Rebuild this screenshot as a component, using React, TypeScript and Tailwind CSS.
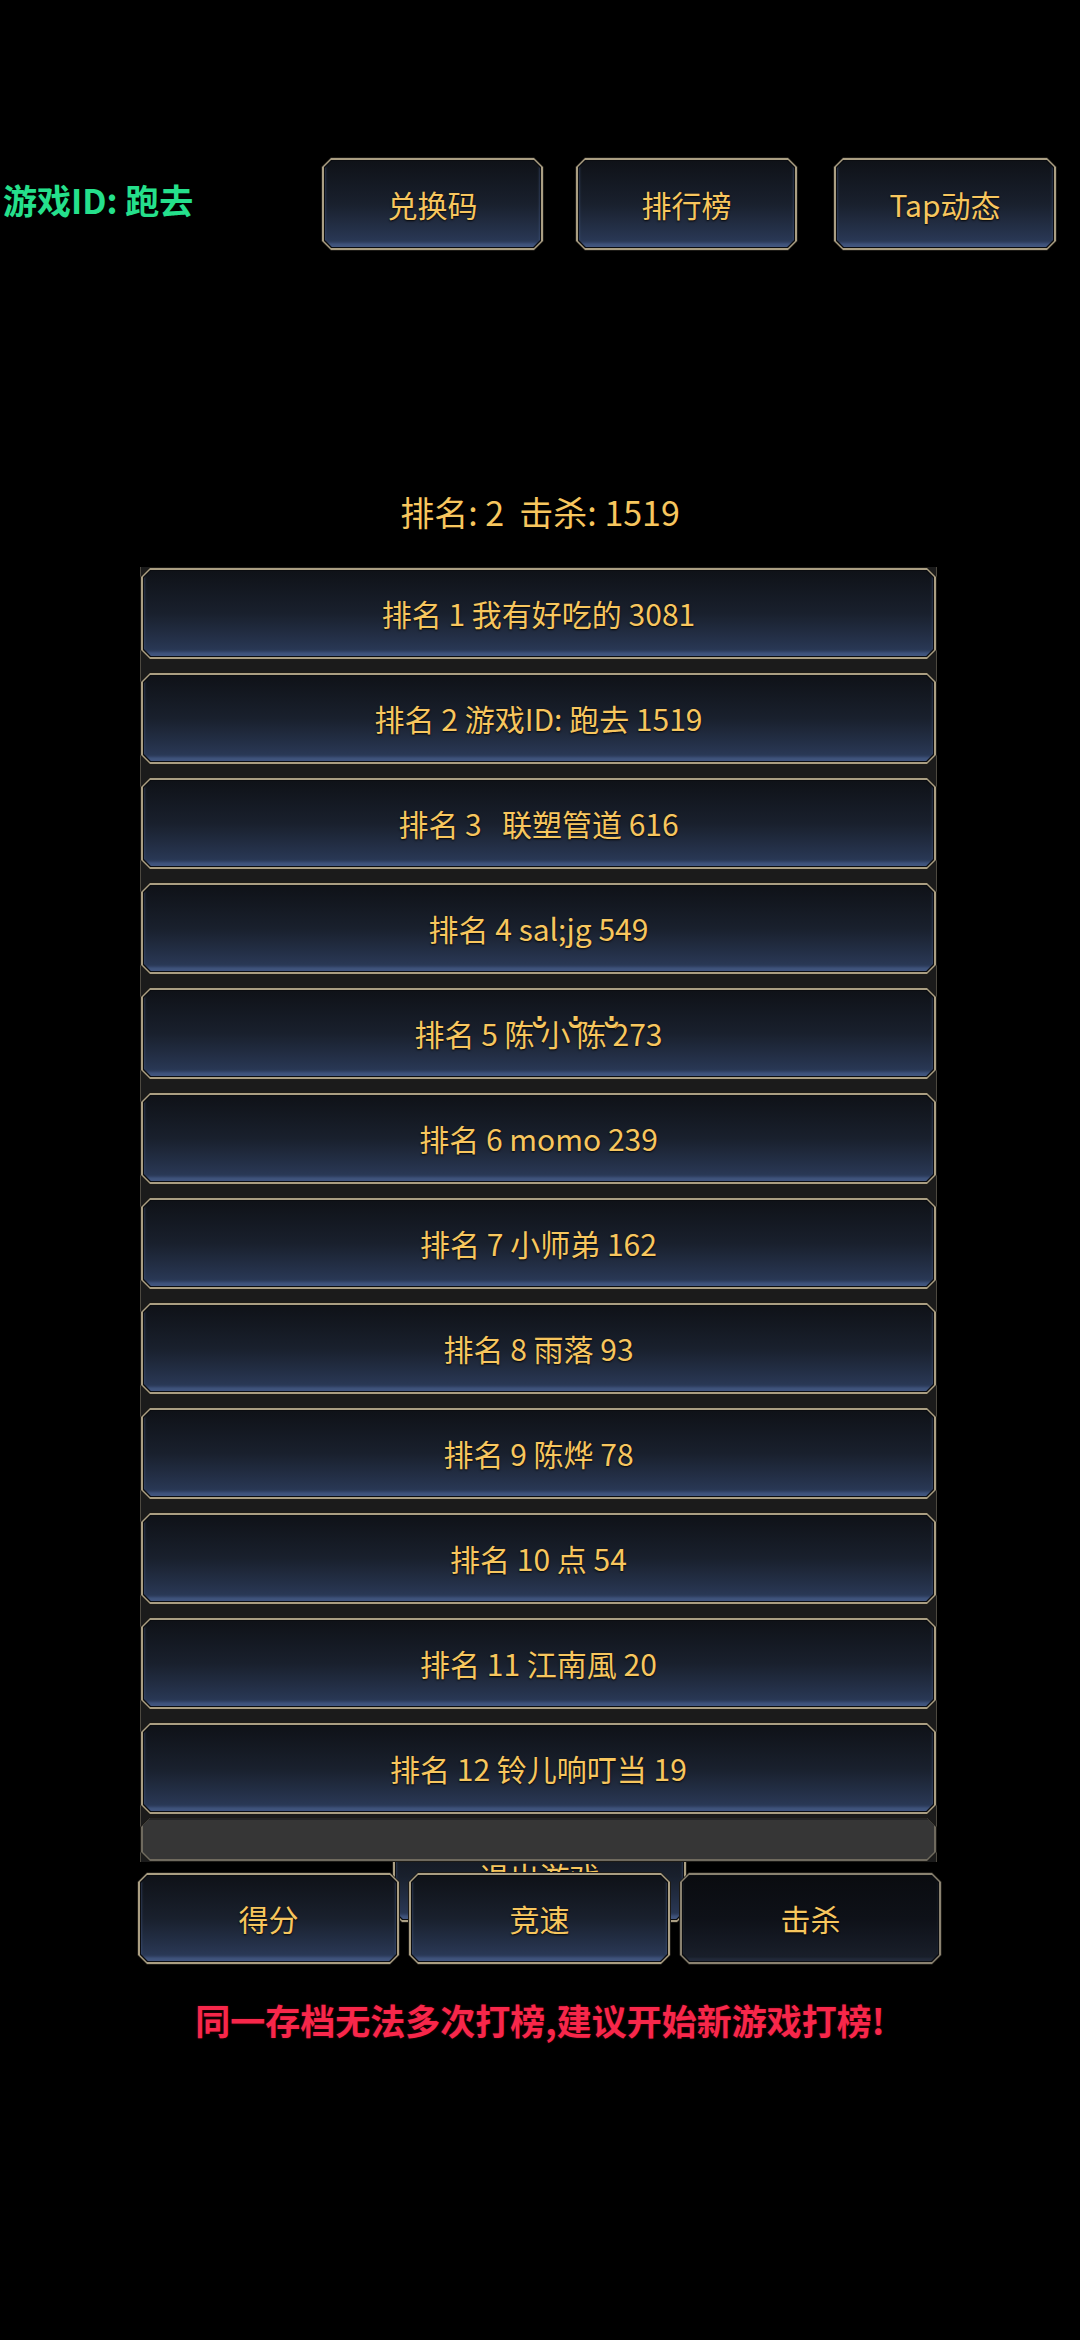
import React from 'react';

// chamfered frame clip paths (outer border / tan border / gradient face)
const CLIP_A = '[clip-path:polygon(10px_0,calc(100%_-_10px)_0,100%_10px,100%_calc(100%_-_10px),calc(100%_-_10px)_100%,10px_100%,0_calc(100%_-_10px),0_10px)]';
const CLIP_B = '[clip-path:polygon(9px_0,calc(100%_-_9px)_0,100%_9px,100%_calc(100%_-_9px),calc(100%_-_9px)_100%,9px_100%,0_calc(100%_-_9px),0_9px)]';
const CLIP_C = '[clip-path:polygon(7px_0,calc(100%_-_7px)_0,100%_7px,100%_calc(100%_-_7px),calc(100%_-_7px)_100%,7px_100%,0_calc(100%_-_7px),0_7px)]';

const GOLD_TEXT = 'text-[#f7c65e] [text-shadow:0_1px_2px_rgba(0,0,0,0.9)]';

interface FrameButtonProps {
    children: React.ReactNode;
    className?: string;
    dark?: boolean;
    textSize?: string;
}

const FrameButton: React.FC<FrameButtonProps> = ({ children, className = '', dark = false, textSize = 'text-[30px]' }) => {
    const face = dark
        ? 'bg-linear-to-b from-[#0a0c10] via-[#0e1118] to-[#1a202c] shadow-[inset_0_-3px_2px_#222a3a]'
        : 'bg-linear-to-b from-[#0f1218] via-[#19202d] to-[#2c3c5c] shadow-[inset_0_-4px_3px_#42567f]';
    const rim = dark ? 'bg-[#8a8270]' : 'bg-[#aa9e82]';
    return (
        <div className={`${CLIP_A} bg-[#1d1b17] p-px ${className}`}>
            <div className={`${CLIP_B} ${rim} h-full p-[2px]`}>
                <div className={`${CLIP_C} bg-[#0b0d11] h-full p-px`}>
                    <div className={`${CLIP_C} ${face} h-full flex items-center justify-center whitespace-pre ${textSize} ${GOLD_TEXT}`}>
                        {children}
                    </div>
                </div>
            </div>
        </div>
    );
};

// decorative combining mark that sits above the glyph boundary
const Swirl: React.FC = () => (
    <span className="relative inline-block w-[6px] overflow-visible">
        <span className="absolute left-[2px] -top-[14px] font-['DejaVu_Sans'] text-[44px] leading-none">{'\u00A0\u0310'}</span>
    </span>
);

const ranks: React.ReactNode[] = [
    '排名 1 我有好吃的 3081',
    '排名 2 游戏ID: 跑去 1519',
    '排名 3   联塑管道 616',
    '排名 4 sal;jg 549',
    <>排名 5 陈<Swirl />小<Swirl />陈<Swirl />273</>,
    '排名 6 momo 239',
    '排名 7 小师弟 162',
    '排名 8 雨落 93',
    '排名 9 陈烨 78',
    '排名 10 点 54',
    '排名 11 江南風 20',
    '排名 12 铃儿响叮当 19',
];

const App: React.FC = () => {
    return (
        <div className="relative w-[1080px] h-[2340px] bg-black overflow-hidden font-['Noto_Sans_CJK_SC','Noto_Sans',sans-serif]">
            {/* exit button, mostly hidden behind the list and tabs */}
            <FrameButton className="absolute left-[392px] top-[1830px] w-[295px] h-[93px] z-0">退出游戏</FrameButton>

            <div className="relative z-10 flex flex-col">
                {/* header */}
                <div className="flex items-center h-[94px] mt-[157px]">
                    <div className="w-[321px] pl-[3px] mb-[8px] text-[34px] font-bold text-[#25e08c] leading-none">游戏ID: 跑去</div>
                    <FrameButton className="w-[223px] h-[94px]">兑换码</FrameButton>
                    <FrameButton className="w-[223px] h-[94px] ml-[31px]">排行榜</FrameButton>
                    <FrameButton className="w-[224px] h-[94px] ml-[35px]">Tap动态</FrameButton>
                </div>

                <div className={`mt-[237px] h-[48px] leading-[48px] text-center whitespace-pre text-[34px] ${GOLD_TEXT}`}>
                    {'排名: 2  击杀: 1519'}
                </div>

                {/* leaderboard list */}
                <div className="ml-[140px] mt-[31px] w-[797px] flex flex-col bg-[#1b1b1b] border-x border-[#4d4940]">
                    <div className="flex flex-col gap-[12px] -mx-px">
                        {ranks.map((r, i) => (
                            <FrameButton key={i} className="h-[93px]">{r}</FrameButton>
                        ))}
                    </div>
                    <div className={`${CLIP_A} -mx-px mt-[2px] h-[45px] bg-[#1d1b17] p-px`}>
                        <div className={`${CLIP_B} h-full bg-[#6f6a5e] px-[2px] pb-[2px]`}>
                            <div className={`${CLIP_C} h-full bg-[#363636] border-t-2 border-[#262626]`} />
                        </div>
                    </div>
                </div>

                {/* tabs */}
                <div className="ml-[137px] mt-[10px] flex gap-[8px]">
                    <FrameButton className="w-[263px] h-[93px]">得分</FrameButton>
                    <FrameButton className="w-[263px] h-[93px]">竞速</FrameButton>
                    <FrameButton className="w-[263px] h-[93px]" dark>击杀</FrameButton>
                </div>

                <div className="mt-[31px] h-[48px] leading-[48px] text-center text-[35px] font-bold text-[#f7274a] [text-shadow:0_0_2px_rgba(120,0,20,0.8)]">
                    同一存档无法多次打榜,建议开始新游戏打榜!
                </div>
            </div>
        </div>
    );
};

export default App;
